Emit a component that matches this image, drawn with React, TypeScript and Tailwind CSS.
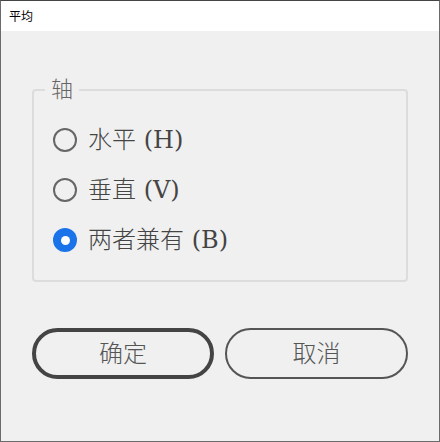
const cjk = '"DejaVu Serif", "Noto Sans CJK SC", serif';

function Radio({ label, checked }: { label: string; checked?: boolean }) {
  return (
    <div className="flex items-center h-[50px] gap-[11px]">
      {checked ? (
        <div className="w-[24px] h-[24px] rounded-full bg-[#1a73e8] flex items-center justify-center">
          <div className="w-[9px] h-[9px] rounded-full bg-white" />
        </div>
      ) : (
        <div className="w-[24px] h-[24px] rounded-full border-2 border-[#666]" />
      )}
      <span className="text-[24px] leading-none text-[#444] font-light" style={{ fontFamily: cjk }}>
        {label}
      </span>
    </div>
  );
}

export default function App() {
  return (
    <div className="w-[440px] h-[442px] bg-[#f0f0f0] border border-[#6b6b6b] border-t-[#444] flex flex-col">
      {/* Заголовок окна */}
      <div className="h-[30px] bg-white flex items-center pl-[8px] shrink-0">
        <span className="text-[12px] text-black" style={{ fontFamily: '"Noto Sans CJK SC", sans-serif' }}>
          平均
        </span>
      </div>

      <fieldset className="mt-[48px] mx-[31px] border-2 border-[#dcdcdc] rounded-[4px] pt-[14px] pb-[15px]">
        <legend
          className="ml-[11px] px-[6px] text-[22px] leading-[22px] text-[#666] font-light"
          style={{ fontFamily: cjk }}
        >
          轴
        </legend>
        <div className="pl-[19px]">
          <Radio label="水平 (H)" />
          <Radio label="垂直 (V)" />
          <Radio label="两者兼有 (B)" checked />
        </div>
      </fieldset>

      <div className="mt-[46px] mx-[31px] flex gap-[11px]">
        <button
          className="w-[183px] h-[51px] rounded-full border-4 border-[#444] text-[24px] text-[#555] font-light"
          style={{ fontFamily: cjk }}
        >
          确定
        </button>
        <button
          className="w-[184px] h-[51px] rounded-full border-2 border-[#555] text-[24px] text-[#555] font-light"
          style={{ fontFamily: cjk }}
        >
          取消
        </button>
      </div>
    </div>
  );
}
